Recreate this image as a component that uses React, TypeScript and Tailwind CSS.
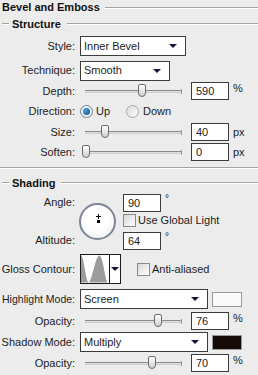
import React from "react"

const Arrow = () => (
    <svg width="8" height="4" viewBox="0 0 8 4"><path d="M0 0h8L4 4z" fill="#0d1540" /></svg>
)

const Etch = ({ className = "" }: { className?: string }) => (
    <div className={`h-[2px] border-t border-[#a3a3a3] border-b border-b-white ${className}`} />
)

const Label = ({ children, className = "" }: { children: React.ReactNode; className?: string }) => (
    <div className={`w-[76px] shrink-0 text-right pr-[1px] whitespace-nowrap ${className}`}>{children}</div>
)

const Select = ({ value, w }: { value: string; w: string }) => (
    <div className={`${w} h-[20px] ml-[4px] bg-white border border-[#3c3c3c] flex items-center justify-between pl-[3px] pr-[8px]`}>
        <span>{value}</span>
        <Arrow />
    </div>
)

const Input = ({ value }: { value: string }) => (
    <div className="w-[38px] h-[18px] bg-white border border-[#3c3c3c] flex items-center pl-[4px]">{value}</div>
)

const Slider = ({ pos }: { pos: number }) => (
    <div className="relative w-[107px] h-[14px] ml-[4px]">
        <div className="absolute left-[5px] right-[5px] top-[6px] h-[3px] border-t border-[#8a8a8a] border-b border-b-[#cfcfcf] bg-[#dedede]" />
        <div className="absolute right-[5px] top-[5px] w-[1px] h-[5px] bg-[#9a9a9a]" />
        <div
            className="absolute top-[0px] w-[8px] h-[13px] rounded-b-[4px] rounded-t-[2px] border border-[#6b6b6b] bg-[linear-gradient(#ffffff,#cfcfcf)]"
            style={{ left: pos - 84 }}
        />
    </div>
)

const SliderRow = ({ label, pos, value, unit, h = "h-[20px]" }: { label: string; pos: number; value: string; unit: string; h?: string }) => (
    <div className={`flex items-center ${h}`}>
        <Label>{label}</Label>
        <Slider pos={pos} />
        <div className="ml-[4px]"><Input value={value} /></div>
        <span className={unit === "%" ? "ml-[4px] -mt-[6px]" : "ml-[4px]"}>{unit}</span>
    </div>
)

const Check = () => (
    <div className="w-[13px] h-[13px] border border-[#8a8a8a] bg-[linear-gradient(135deg,#d8d8d8,#ffffff)]" />
)

const Degree = () => <span className="ml-[4px] text-[10px] leading-[10px]">°</span>

export default function App() {
    return (
        <div className="w-[258px] h-[375px] bg-[#ececec] text-[#1c1c1c] text-[11px] leading-none font-['Liberation_Sans',Arial,sans-serif] overflow-hidden flex flex-col">
            <div className="h-[15px] flex items-center pl-[2px]">
                <span className="font-bold text-[#111]">Bevel and Emboss</span>
                <Etch className="flex-1 ml-[5px]" />
            </div>
            <div className="h-[18px] flex items-center">
                <Etch className="w-[7px] ml-[2px]" />
                <span className="font-bold ml-[3px] text-[#111]">Structure</span>
                <Etch className="flex-1 ml-[6px]" />
            </div>
            <div className="mt-[3px] h-[20px] flex items-center">
                <Label>Style:</Label>
                <Select value="Inner Bevel" w="w-[106px]" />
            </div>
            <div className="mt-[4px] h-[21px] flex items-center">
                <Label>Technique:</Label>
                <Select value="Smooth" w="w-[90px]" />
            </div>
            <SliderRow label="Depth:" pos={142} value="590" unit="%" />
            <div className="h-[21px] flex items-center">
                <Label>Direction:</Label>
                <div className="ml-[4px] w-[13px] h-[13px] rounded-full border border-[#6d7f8f] bg-[#eef2f5] flex items-center justify-center">
                    <div className="w-[7px] h-[7px] rounded-full bg-[radial-gradient(circle_at_35%_35%,#4aa0d8,#0d4f86)]" />
                </div>
                <span className="ml-[3px]">Up</span>
                <div className="ml-[16px] w-[13px] h-[13px] rounded-full border border-[#a8a8a8] bg-[linear-gradient(135deg,#dcdcdc,#fafafa)]" />
                <span className="ml-[4px]">Down</span>
            </div>
            <SliderRow label="Size:" pos={105} value="40" unit="px" />
            <SliderRow label="Soften:" pos={86} value="0" unit="px" />
            <Etch className="mt-[5px]" />
            <div className="mt-[6px] h-[16px] flex items-center">
                <Etch className="w-[7px] ml-[2px]" />
                <span className="font-bold ml-[3px] text-[#111]">Shading</span>
                <Etch className="flex-1 ml-[6px]" />
            </div>
            <div className="mt-[3px] h-[55px] flex">
                <div className="w-[76px] flex flex-col justify-between text-right pr-[1px]">
                    <div className="h-[17px] flex items-center justify-end">Angle:</div>
                    <div className="h-[17px] flex items-center justify-end">Altitude:</div>
                </div>
                <div className="self-center ml-[3px] relative w-[37px] h-[37px] rounded-full border-[2px] border-[#7d8696] bg-[radial-gradient(circle_at_45%_40%,#ffffff_45%,#e4e6ea)]">
                    <div className="absolute left-[15px] top-[11px] w-[5px] h-[1px] bg-black" />
                    <div className="absolute left-[17px] top-[9px] w-[1px] h-[5px] bg-black" />
                    <div className="absolute left-[15.5px] top-[15px] w-[3px] h-[3px] bg-black" />
                </div>
                <div className="ml-[7px] flex flex-col">
                    <div className="h-[17px] flex items-start">
                        <Input value="90" />
                        <Degree />
                    </div>
                    <div className="mt-[3px] h-[13px] flex items-center">
                        <Check />
                        <span className="ml-[2px] whitespace-nowrap">Use Global Light</span>
                    </div>
                    <div className="mt-[5px] h-[17px] flex items-start">
                        <Input value="64" />
                        <Degree />
                    </div>
                </div>
            </div>
            <div className="mt-[5px] h-[30px] flex items-center">
                <Label>Gloss Contour:</Label>
                <div className="ml-[4px] w-[41px] h-[30px] border border-[#1a1a1a] bg-white flex">
                    <svg width="29" height="28" viewBox="0 0 29 28" className="border-r border-[#1a1a1a]">
                        <path d="M0 0 C3 0 5 28 8 28 C11 28 15 0 19 0 C23 0 25 28 28 28 L0 28 Z" fill="#9c9c9c" />
                    </svg>
                    <div className="flex-1 flex items-center justify-center"><Arrow /></div>
                </div>
                <div className="ml-[16px]"><Check /></div>
                <span className="ml-[2px]">Anti-aliased</span>
            </div>
            <div className="mt-[5px] h-[20px] flex items-center">
                <Label className="text-[10.5px]">Highlight Mode:</Label>
                <Select value="Screen" w="w-[128px]" />
                <div className="ml-[4px] w-[30px] h-[15px] border border-[#9a9a9a] bg-[#fafafa]" />
            </div>
            <SliderRow label="Opacity:" pos={158} value="76" unit="%" h="h-[22px] mt-[1px]" />
            <div className="h-[20px] flex items-center">
                <Label>Shadow Mode:</Label>
                <Select value="Multiply" w="w-[128px]" />
                <div className="ml-[4px] w-[30px] h-[15px] border border-[#9a9a9a] bg-[#140a06]" />
            </div>
            <SliderRow label="Opacity:" pos={152} value="70" unit="%" h="h-[22px]" />
        </div>
    )
}
